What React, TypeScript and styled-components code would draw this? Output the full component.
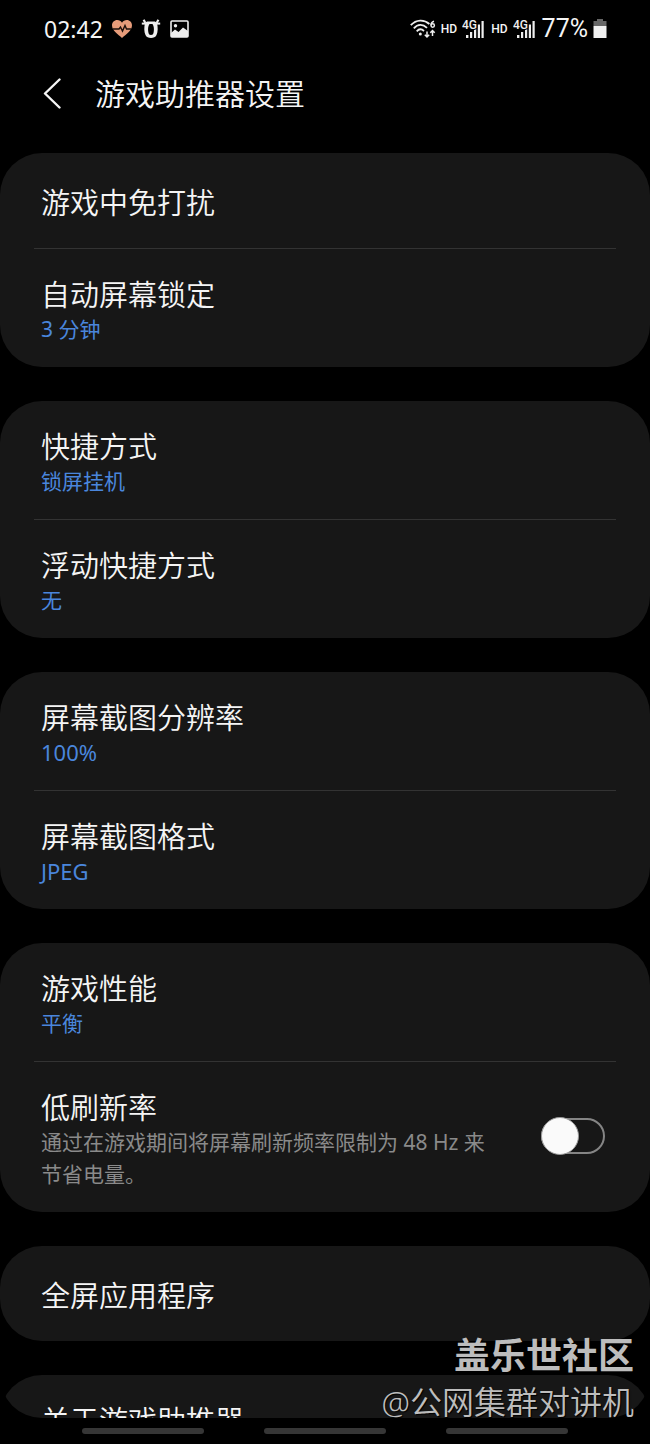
import React, { useState } from "react";
import styled, { createGlobalStyle } from "styled-components";

const GlobalStyle = createGlobalStyle`
  *, *::before, *::after { box-sizing: border-box; }
  body {
    margin: 0;
    background: #000;
    color: #f5f5f5;
    font-family: "Noto Sans", "Noto Sans CJK SC", sans-serif;
  }
`;

const Screen = styled.div`
  position: relative;
  display: flex;
  flex-direction: column;
  height: 100vh;
  background: #000;
  overflow: hidden;
`;

const StatusBar = styled.div`
  display: flex;
  flex: none;
  align-items: center;
  justify-content: space-between;
  height: 58px;
  padding: 0 43px 0 44px;
`;

const StatusGroup = styled.div<{ $gap: number }>`
  display: flex;
  align-items: center;
  gap: ${(p) => p.$gap}px;
`;

const StatusText = styled.span<{ $size: number; $bold?: boolean }>`
  font-family: Roboto, "Noto Sans", sans-serif;
  font-size: ${(p) => p.$size}px;
  font-weight: ${(p) => (p.$bold ? 500 : 400)};
  line-height: 28px;
`;

const Clock = styled(StatusText)`
  font-family: "Noto Sans", sans-serif;
`;

const Header = styled.header`
  display: flex;
  flex: none;
  align-items: center;
  gap: 32px;
  height: 72px;
  padding: 0 41px;
`;

const BackButton = styled.button`
  display: flex;
  padding: 0;
  border: 0;
  background: none;
  color: inherit;
`;

const PageTitle = styled.h1`
  margin: 0;
  font-size: 30px;
  font-weight: 350;
  line-height: 40px;
`;

const Content = styled.main`
  flex: 1;
  min-height: 0;
  margin-top: 23px;
  border-radius: 0 0 42px 42px;
  overflow: hidden;
`;

const CardList = styled.div`
  display: flex;
  flex-direction: column;
  gap: 34px;
`;

const Card = styled.section`
  display: flex;
  flex-direction: column;
  border-radius: 42px;
  background: #171717;
`;

const Divider = styled.hr`
  height: 1px;
  margin: 0 34px;
  border: 0;
  background: #333;
`;

const RowButton = styled.button<{ $single?: boolean }>`
  display: flex;
  flex-direction: column;
  align-items: flex-start;
  padding: ${(p) => (p.$single ? "32px 41px 27px" : "28px 41px 22px")};
  border: 0;
  background: none;
  color: inherit;
  font: inherit;
  text-align: left;
`;

const RowLabel = styled.label`
  display: flex;
  align-items: center;
  justify-content: space-between;
  gap: 48px;
  padding: 28px 45px 22px 41px;
`;

const RowText = styled.span`
  display: flex;
  flex-direction: column;
`;

const RowTitle = styled.span`
  font-size: 29px;
  font-weight: 350;
  line-height: 36px;
`;

const RowValue = styled.span<{ $muted?: boolean; $latin?: boolean }>`
  color: ${(p) => (p.$muted ? "#8a8a8a" : "#4a86dc")};
  font-size: ${(p) => (p.$latin ? 22 : 21)}px;
  font-weight: 400;
  line-height: 32px;
`;

const Switch = styled.input`
  display: flex;
  flex: none;
  align-items: center;
  align-self: flex-start;
  width: 64px;
  height: 36px;
  margin: 28px 0 0;
  border: 2px solid #858585;
  border-radius: 18px;
  appearance: none;

  &::before {
    content: "";
    width: 38px;
    height: 38px;
    margin-left: -2px;
    flex: none;
    border: 1px solid #999;
    border-radius: 50%;
    background: #fafafa;
  }

  &:checked {
    justify-content: flex-end;
    background: #4a86dc;
  }
`;

const NavBar = styled.nav`
  display: flex;
  flex: none;
  align-items: center;
  justify-content: center;
  gap: 60px;
  height: 26px;
`;

const NavButton = styled.button`
  width: 122px;
  height: 6px;
  padding: 0;
  border: 0;
  border-radius: 3px;
  background: #363636;
`;

const Watermark = styled.div`
  position: absolute;
  right: 16px;
  bottom: 20px;
  display: flex;
  flex-direction: column;
  align-items: flex-end;
  color: #bdbdbd;
  text-shadow: 1px 1px 1px #000;
  pointer-events: none;
`;

const WatermarkName = styled.strong`
  font-size: 36px;
  font-weight: 700;
  line-height: 48px;
`;

const WatermarkUser = styled.span`
  font-size: 32px;
  font-weight: 350;
  line-height: 44px;
`;

const HeartIcon = () => (
  <svg width="20" height="18" viewBox="0 0 20 18" aria-hidden="true">
    <path d="M10 18C6 14.500 0 10.500 0 5.300C0 2.300 2.300 0 5.200 0C7.200 0 9 1 10 2.700C11 1 12.800 0 14.800 0C17.700 0 20 2.300 20 5.300C20 10.500 14 14.500 10 18Z" fill="#e79c7a" />
    <path d="M1 9H7L8.500 7L10.500 11L13 5.500L14.500 9H19" fill="none" stroke="#1c0f0a" strokeWidth="1.400" />
  </svg>
);

const BullIcon = () => (
  <svg width="20" height="20" viewBox="0 0 20 20" aria-hidden="true">
    <path d="M.8 4.600H19.200" stroke="#eee" strokeWidth="2" fill="none" />
    <path d="M2.600 .8L4.400 4M17.400 .8L15.600 4" stroke="#eee" strokeWidth="2.200" fill="none" />
    <path d="M6 2.500H14L16 4C17 8 17 13 15.500 16C14.500 18.200 12.500 19 10 19S5.500 18.200 4.500 16C3 13 3 8 4 4Z" fill="#eee" />
    <path d="M8.500 5H11.500C13 7 13.200 10 12.700 13C12.300 15.400 11.500 16 10 16S7.700 15.400 7.300 13C6.800 10 7 7 8.500 5Z" fill="#000" />
  </svg>
);

const PictureIcon = () => (
  <svg width="19" height="18" viewBox="0 0 19 18" aria-hidden="true">
    <rect x="1" y="1" width="17" height="16" rx="1" fill="none" stroke="#eee" strokeWidth="1.600" />
    <circle cx="5.500" cy="5.800" r="1.700" fill="#eee" />
    <path d="M1 13L5 9.500L8.500 12L13 7.500L18 11V17H1Z" fill="#eee" />
  </svg>
);

const WifiIcon = () => (
  <svg width="26" height="20" viewBox="0 0 26 20" aria-hidden="true">
    <g fill="none" stroke="#eee" strokeWidth="1.800">
      <path d="M.8 6.200C6.200 .2 14.200 .2 19.400 5" />
      <path d="M3.800 9.300C7.800 4.800 12.800 4.800 17 8.800" />
      <path d="M6.700 12.300C9 9.800 11.600 9.800 14 12" />
    </g>
    <circle cx="10.300" cy="15" r="1.500" fill="#eee" />
    <g fill="none" stroke="#eee" strokeWidth="1.500">
      <path d="M24 2.300C22 2.800 21 4.500 21 6.300" />
      <circle cx="22.700" cy="6.500" r="1.700" />
      <path d="M17 12.500V18M14.800 15.800L17 18L19.200 15.800" />
      <path d="M22.500 17V11.500M20.300 13.700L22.500 11.500L24.700 13.700" />
    </g>
  </svg>
);

const Signal = styled.svg`
  margin-right: 2px;
`;

const SignalText = styled.text`
  font-family: Roboto, sans-serif;
  font-size: 12px;
  font-weight: 500;
  fill: #eee;
  stroke: #000;
  stroke-width: 2px;
  paint-order: stroke;
`;

const SignalIcon = () => (
  <Signal width="22" height="20" viewBox="0 0 22 20" aria-hidden="true">
    <g fill="#eee">
      <rect x="4" y="16" width="2.400" height="3" />
      <rect x="8" y="13" width="2.200" height="6" />
      <rect x="12" y="9.500" width="2.200" height="9.500" />
      <rect x="15.800" y="5.500" width="2.200" height="13.500" />
      <rect x="19.500" y="2" width="2.200" height="17" />
    </g>
    <SignalText x="0" y="10">4G</SignalText>
  </Signal>
);

const BatteryIcon = () => (
  <svg width="14" height="20" viewBox="0 0 14 20" aria-hidden="true">
    <path d="M4 0H10V2H13.500V7H.5V2H4Z" fill="#666" />
    <path d="M.5 7H13.500V19H.5Z" fill="#f0f0f0" />
  </svg>
);

const ChevronIcon = () => (
  <svg width="22" height="32" viewBox="0 0 22 32" aria-hidden="true">
    <path d="M18.500 1.500L4 15.500L18.500 29.500" fill="none" stroke="#f5f5f5" strokeWidth="2.400" strokeLinecap="round" strokeLinejoin="round" />
  </svg>
);

type Item = { title: string; value?: string; latin?: boolean; single?: boolean };

const groups: Item[][] = [
  [
    { title: "游戏中免打扰", single: true },
    { title: "自动屏幕锁定", value: "3 分钟" },
  ],
  [
    { title: "快捷方式", value: "锁屏挂机" },
    { title: "浮动快捷方式", value: "无" },
  ],
  [
    { title: "屏幕截图分辨率", value: "100%", latin: true },
    { title: "屏幕截图格式", value: "JPEG", latin: true },
  ],
];

const Row = ({ title, value, latin, single }: Item) => (
  <RowButton type="button" $single={single}>
    <RowTitle>{title}</RowTitle>
    {value && <RowValue $latin={latin}>{value}</RowValue>}
  </RowButton>
);

export default function App() {
  const [lowRefresh, setLowRefresh] = useState(false);

  return (
    <Screen>
      <GlobalStyle />
      <StatusBar>
        <StatusGroup $gap={9}>
          <Clock $size={23}>02:42</Clock>
          <HeartIcon />
          <BullIcon />
          <PictureIcon />
        </StatusGroup>
        <StatusGroup $gap={5}>
          <WifiIcon />
          <StatusText $size={12} $bold>HD</StatusText>
          <SignalIcon />
          <StatusText $size={12} $bold>HD</StatusText>
          <SignalIcon />
          <StatusText $size={25}>77%</StatusText>
          <BatteryIcon />
        </StatusGroup>
      </StatusBar>
      <Header>
        <BackButton type="button" aria-label="返回">
          <ChevronIcon />
        </BackButton>
        <PageTitle>游戏助推器设置</PageTitle>
      </Header>
      <Content>
        <CardList>
          {groups.map((items) => (
            <Card key={items[0].title}>
              {items.map((item, i) => (
                <React.Fragment key={item.title}>
                  {i > 0 && <Divider />}
                  <Row {...item} />
                </React.Fragment>
              ))}
            </Card>
          ))}
          <Card>
            <Row title="游戏性能" value="平衡" />
            <Divider />
            <RowLabel>
              <RowText>
                <RowTitle>低刷新率</RowTitle>
                <RowValue $muted>通过在游戏期间将屏幕刷新频率限制为 48 Hz 来节省电量。</RowValue>
              </RowText>
              <Switch
                type="checkbox"
                role="switch"
                checked={lowRefresh}
                onChange={(e) => setLowRefresh(e.target.checked)}
              />
            </RowLabel>
          </Card>
          <Card>
            <Row title="全屏应用程序" single />
          </Card>
          <Card>
            <Row title="关于游戏助推器" />
          </Card>
        </CardList>
      </Content>
      <NavBar>
        <NavButton type="button" aria-label="最近" />
        <NavButton type="button" aria-label="主页" />
        <NavButton type="button" aria-label="后退" />
      </NavBar>
      <Watermark>
        <WatermarkName>盖乐世社区</WatermarkName>
        <WatermarkUser>@公网集群对讲机</WatermarkUser>
      </Watermark>
    </Screen>
  );
}
